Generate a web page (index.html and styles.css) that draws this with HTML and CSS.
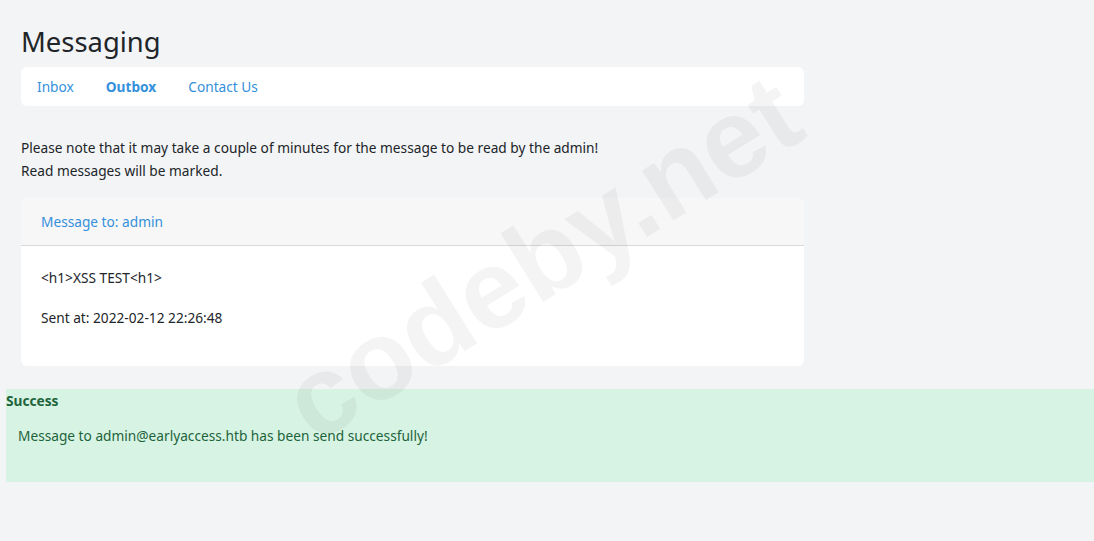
FILE: index.html
```html
<!DOCTYPE html>
<html lang="en">
<head>
<meta charset="utf-8">
<title>Messaging</title>
<link rel="stylesheet" href="styles.css">
</head>
<body>
<div class="page">
  <div class="container">
    <h2 class="title">Messaging</h2>
    <nav class="tabs">
      <a class="tab" href="#">Inbox</a>
      <a class="tab active" href="#">Outbox</a>
      <a class="tab" href="#">Contact Us</a>
    </nav>
    <div class="note">
      <p>Please note that it may take a couple of minutes for the message to be read by the admin!</p>
      <p>Read messages will be marked.</p>
    </div>
    <div class="card">
      <div class="card-header"><a href="#">Message to: admin</a></div>
      <div class="card-body">
        <p>&lt;h1&gt;XSS TEST&lt;h1&gt;</p>
        <p>Sent at: 2022-02-12 22:26:48</p>
      </div>
    </div>
  </div>
  <div class="alert">
    <strong class="alert-title">Success</strong>
    <p class="alert-text">Message to admin@earlyaccess.htb has been send successfully!</p>
  </div>
  <div class="watermark">codeby.net</div>
</div>
</body>
</html>
```
FILE: styles.css
```css
html, body {
  margin: 0;
  padding: 0;
  background: #f3f4f6;
}
body {
  font-family: "Noto Sans", "Open Sans", sans-serif;
  font-size: 13.7px;
  line-height: 23px;
  color: #212529;
}
.page {
  position: relative;
  height: 541px;
  overflow: hidden;
}
.container {
  width: 783px;
  margin-left: 21px;
  padding-top: 24px;
}
.title {
  margin: 0;
  font-size: 27.4px;
  font-weight: 400;
  line-height: 36px;
  color: #212529;
}
.tabs {
  margin-top: 7px;
  height: 39px;
  background: #fff;
  border-radius: 6px;
  display: flex;
  align-items: center;
  padding-left: 16px;
  gap: 32px;
}
.tab {
  color: #3490dc;
  text-decoration: none;
}
.tab.active {
  font-weight: 700;
}
.note {
  margin-top: 30px;
  margin-bottom: 16px;
}
.note p {
  margin: 0;
}
.card {
  background: #fff;
  border-radius: 6px;
  overflow: hidden;
}
.card-header {
  background: #f7f7f7;
  padding: 12px 20px;
  border-bottom: 1px solid #d9d9d9;
}
.card-header a {
  color: #3490dc;
  text-decoration: none;
}
.card-body {
  padding: 20px 20px 20px;
}
.card-body p {
  margin: 0 0 17px;
}
.alert {
  margin: 23px 0 0 6px;
  height: 93px;
  background: #d7f3e3;
  color: #1d643b;
}
.alert-title {
  display: block;
  font-weight: 700;
}
.alert-text {
  margin: 12px 0 0;
  padding-left: 12px;
}
.watermark {
  position: absolute;
  left: 542px;
  top: 258px;
  transform: translate(-50%, -50%) rotate(-32deg);
  font-family: "Liberation Sans", Arial, sans-serif;
  font-weight: 700;
  font-size: 112px;
  line-height: 1;
  color: rgba(0, 0, 0, 0.045);
  white-space: nowrap;
  pointer-events: none;
}
```
